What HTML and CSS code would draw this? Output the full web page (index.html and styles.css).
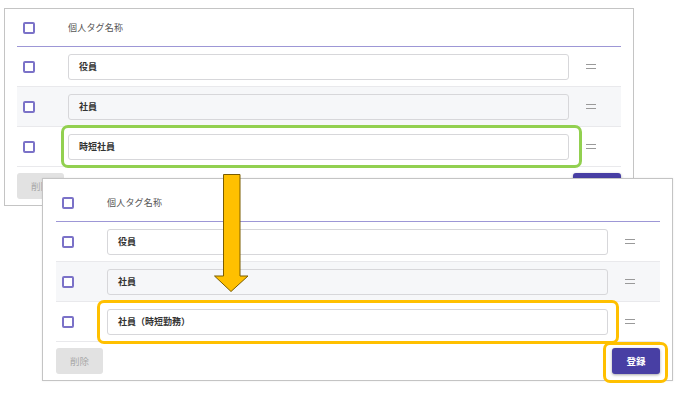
FILE: index.html
```html
<!DOCTYPE html>
<html lang="ja">
<head>
<meta charset="utf-8">
<link rel="stylesheet" href="styles.css">
</head>
<body>
<div class="stage">
  <section class="panel panel-a">
    <div class="table">
      <div class="head">
        <span class="cb-cell"><span class="cb"></span></span>
        <span class="head-label">個人タグ名称</span>
      </div>
      <div class="row">
        <span class="cb-cell"><span class="cb"></span></span>
        <span class="field"><span class="input">役員</span></span>
        <span class="handle"></span>
      </div>
      <div class="row alt">
        <span class="cb-cell"><span class="cb"></span></span>
        <span class="field"><span class="input">社員</span></span>
        <span class="handle"></span>
      </div>
      <div class="row">
        <span class="cb-cell"><span class="cb"></span></span>
        <span class="field mark-green"><span class="input">時短社員</span></span>
        <span class="handle"></span>
      </div>
    </div>
    <div class="footer">
      <span class="btn btn-del">削除</span>
      <span class="btn btn-save">登録</span>
    </div>
  </section>

  <section class="panel panel-b">
    <div class="table">
      <div class="head">
        <span class="cb-cell"><span class="cb"></span></span>
        <span class="head-label">個人タグ名称</span>
      </div>
      <div class="row">
        <span class="cb-cell"><span class="cb"></span></span>
        <span class="field"><span class="input">役員</span></span>
        <span class="handle"></span>
      </div>
      <div class="row alt">
        <span class="cb-cell"><span class="cb"></span></span>
        <span class="field"><span class="input">社員</span></span>
        <span class="handle"></span>
      </div>
      <div class="row">
        <span class="cb-cell"><span class="cb"></span></span>
        <span class="field mark-orange"><span class="input">社員（時短勤務）</span></span>
        <span class="handle"></span>
      </div>
    </div>
    <div class="footer">
      <span class="btn btn-del">削除</span>
      <span class="btn btn-save mark-btn">登録</span>
    </div>
  </section>

  <svg class="arrow" width="40" height="122" viewBox="0 0 40 122">
    <polygon points="10.5,1.5 27,1.5 27,103 35,103 18,118.5 1.5,103 10.5,103" fill="#ffc000" stroke="#7a5c00" stroke-width="1"/>
  </svg>
</div>
</body>
</html>
```

FILE: styles.css
```css
*, *::before, *::after { box-sizing: border-box; }
html, body { margin: 0; padding: 0; background: #ffffff; }
body {
  font-family: "Noto Sans CJK JP", "Noto Sans", sans-serif;
  color: #333333;
}
.stage {
  position: relative;
  width: 682px;
  height: 393px;
  overflow: hidden;
}
.panel {
  position: absolute;
  background: #ffffff;
  border: 1px solid #c4c4c4;
  display: flex;
  flex-direction: column;
}
.panel-a {
  left: 4px;
  top: 8px;
  width: 630px;
  height: 198px;
  padding: 0 13px 0 12px;
}
.panel-b {
  left: 42px;
  top: 178px;
  width: 631px;
  height: 203px;
  padding: 5px 12px 0 13px;
  box-shadow: 0 0 2px rgba(0,0,0,0.08);
}
.table {
  width: 604px;
  display: flex;
  flex-direction: column;
  flex-shrink: 0;
}
.head {
  height: 38px;
  flex-shrink: 0;
  display: flex;
  align-items: center;
  border-bottom: 1px solid #9d97d6;
}
.cb-cell {
  width: 51px;
  flex-shrink: 0;
  padding-left: 6px;
  display: flex;
  align-items: center;
}
.cb {
  flex-shrink: 0;
  width: 12px;
  height: 12px;
  border: 2px solid #7b72c8;
  border-radius: 2px;
  background: #fff;
}
.head-label {
  font-size: 9px;
  color: #555555;
  letter-spacing: 0.2px;
}
.row {
  height: 40px;
  flex-shrink: 0;
  display: flex;
  align-items: center;
  border-bottom: 1px solid #e9e9ec;
}
.row.alt { background: #f6f7f9; }
.field {
  position: relative;
  width: 501px;
  flex-shrink: 0;
  display: flex;
}
.input {
  width: 501px;
  height: 26px;
  border: 1px solid #d7d7da;
  border-radius: 3px;
  background: #ffffff;
  padding-left: 10px;
  display: flex;
  align-items: center;
  font-size: 9px;
  font-weight: 700;
  color: #333;
}
.row.alt .input { background: #f6f7f9; }
.handle {
  flex-shrink: 0;
  margin-left: 17px;
  width: 10px;
  height: 5px;
  border-top: 1.5px solid #9a9a9a;
  border-bottom: 1.5px solid #9a9a9a;
}
.footer {
  padding-top: 6px;
  display: flex;
  justify-content: space-between;
  width: 604px;
  flex-shrink: 0;
}
.btn {
  position: relative;
  height: 26px;
  flex-shrink: 0;
  border-radius: 3px;
  display: flex;
  align-items: center;
  justify-content: center;
  font-size: 9.5px;
}
.btn-del {
  width: 47px;
  background: #e2e2e2;
  color: #a9a9a9;
}
.btn-save {
  width: 48px;
  background: #483fa4;
  color: #ffffff;
  font-weight: 700;
  box-shadow: 0 1px 3px rgba(0,0,0,0.35);
}
.mark-green::after,
.mark-orange::after,
.mark-btn::after {
  content: "";
  position: absolute;
  border-radius: 7px;
  pointer-events: none;
}
.mark-green::after {
  left: -7px;
  top: -9px;
  width: 521px;
  height: 43px;
  border: 3px solid #92d050;
}
.mark-orange::after {
  left: -10px;
  top: -9px;
  width: 522px;
  height: 44px;
  border: 3px solid #ffc000;
}
.mark-btn::after {
  left: -9px;
  top: -6px;
  width: 65px;
  height: 41px;
  border: 3px solid #ffc000;
}
.arrow {
  position: absolute;
  left: 213px;
  top: 173px;
}
```
